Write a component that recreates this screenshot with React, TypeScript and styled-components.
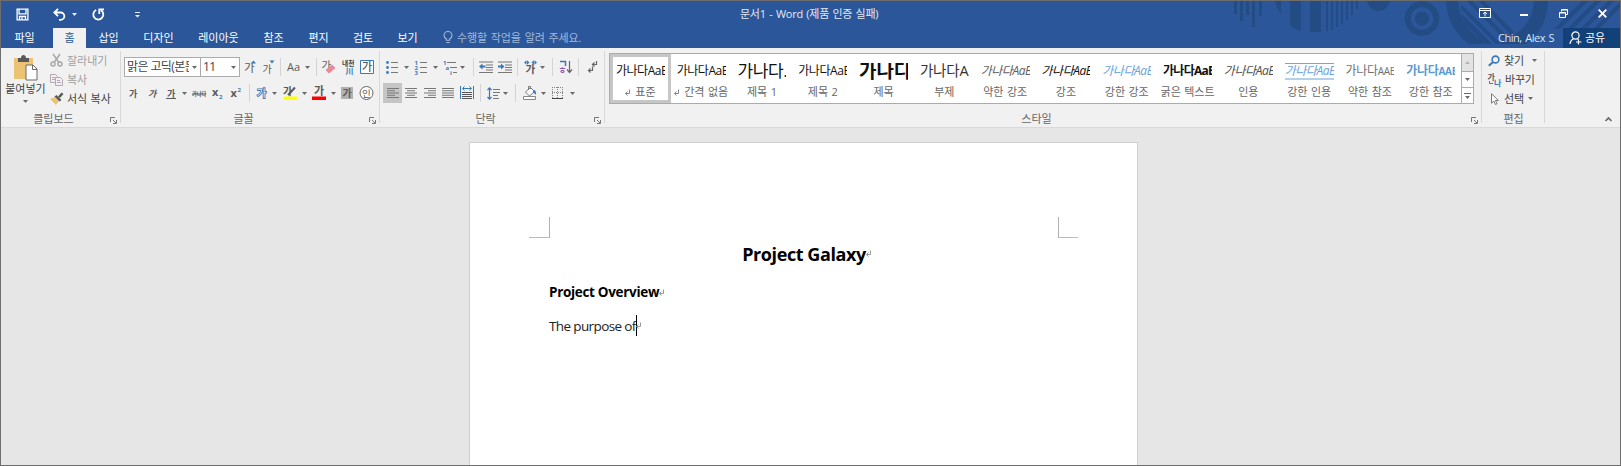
import React from 'react';
import styled, { createGlobalStyle, css } from 'styled-components';

const BLUE = '#2b579a';
const ACCENT = '#3b78b8';
const INK = '#5a5a5a';
const UI = `'Open Sans', 'Noto Sans CJK KR', sans-serif`;

const Global = createGlobalStyle`
  * { box-sizing: border-box; }
  html, body { margin: 0; padding: 0; background: #e6e6e6; }
  body { font-family: ${UI}; font-size: 11px; line-height: 16px; overflow: hidden; }
  svg { display: block; flex: none; overflow: visible; }
`;

const Window = styled.div`
  width: 1621px;
  height: 466px;
  border: 1px solid #6e6e6e;
  background: #e6e6e6;
  display: flex;
  flex-direction: column;
  overflow: hidden;
`;

const Text = styled.span<{ $size?: number; $ls?: number; $ws?: number; $color?: string }>`
  font-size: ${p => p.$size ?? 11}px;
  letter-spacing: ${p => p.$ls ?? 0}px;
  word-spacing: ${p => p.$ws ?? 1}px;
  color: ${p => p.$color ?? 'inherit'};
  white-space: pre;
  flex: none;
`;

/* ---------- header ---------- */
const Header = styled.header`
  position: relative;
  flex: none;
  height: 47px;
  background: ${BLUE};
  color: #fff;
`;
const Pattern = styled.svg`
  position: absolute;
  right: 0;
  top: 0;
`;
const TitleBar = styled.div`
  position: relative;
  display: flex;
  height: 27px;
  align-items: center;
`;
const QuickAccess = styled.div`
  display: flex;
  align-items: center;
  width: 739px;
  padding-left: 15px;
  height: 25px;
`;
const Title = styled.div`
  padding-bottom: 1px;
  display: flex;
`;
const Gap = styled.span<{ $w: number }>`
  flex: none;
  width: ${p => p.$w}px;
`;
const WindowButtons = styled.div`
  display: flex;
  align-items: center;
  margin-left: auto;
  padding: 0 13px 3px 0;
`;
const TabBar = styled.nav`
  position: relative;
  display: flex;
  height: 20px;
  align-items: stretch;
`;
const Tab = styled.div<{ $w: number; $active?: boolean; $shift?: number }>`
  width: ${p => p.$w}px;
  flex: none;
  display: flex;
  align-items: center;
  justify-content: center;
  padding-bottom: 1px;
  padding-right: ${p => p.$shift ?? 0}px;
  ${p => p.$active && css`background: #f1f1f1; color: ${BLUE};`}
`;
const Tell = styled.div`
  display: flex;
  align-items: center;
  gap: 4px;
  margin-left: 13px;
  padding-bottom: 1px;
  color: #a3b8d8;
`;
const Account = styled.div`
  margin-left: auto;
  margin-right: 9px;
  display: flex;
  align-items: center;
  color: #dfe6f1;
`;
const Share = styled.div`
  width: 57px;
  background: #124078;
  display: flex;
  align-items: center;
  gap: 3px;
  padding-left: 6px;
`;

/* ---------- ribbon ---------- */
const Ribbon = styled.section`
  flex: none;
  height: 80px;
  background: #f1f1f1;
  border-bottom: 1px solid #d9d9d9;
  display: flex;
  color: #444;
`;
const Group = styled.div<{ $w: number }>`
  position: relative;
  width: ${p => p.$w}px;
  flex: none;
  display: flex;
  flex-direction: column;
  justify-content: space-between;
  &::after {
    content: '';
    position: absolute;
    right: 0;
    top: 3px;
    height: 72px;
    width: 1px;
    background: #d8d8d8;
  }
`;
const GroupFoot = styled.div`
  height: 16px;
  display: flex;
  align-items: center;
  justify-content: center;
  color: #666;
`;
const Launcher = styled.div`
  position: absolute;
  right: 4px;
  bottom: 3px;
`;
const Rows = styled.div`
  display: flex;
  flex-direction: column;
  gap: 6px;
  padding-top: 9px;
`;
const Row = styled.div`
  display: flex;
  align-items: center;
  height: 20px;
`;
const Cell = styled.div<{ $ml: number }>`
  flex: none;
  margin-left: ${p => p.$ml}px;
`;
const Divider = styled.div<{ $ml: number }>`
  flex: none;
  margin-left: ${p => p.$ml}px;
  width: 1px;
  height: 18px;
  background: #d4d4d4;
`;
const Combo = styled.div<{ $w: number; $ml: number }>`
  flex: none;
  width: ${p => p.$w}px;
  margin-left: ${p => p.$ml}px;
  height: 20px;
  border: 1px solid #ababab;
  background: #fff;
  display: flex;
  align-items: center;
  justify-content: space-between;
  padding: 0 3px 0 2px;
`;
const ComboText = styled.div<{ $w: number }>`
  width: ${p => p.$w}px;
  overflow: hidden;
  white-space: pre;
  font-size: 12px;
  letter-spacing: -0.6px;
`;
const Pressed = styled.div<{ $ml: number }>`
  flex: none;
  margin-left: ${p => p.$ml}px;
  width: 19px;
  height: 20px;
  background: #c5c5c5;
  display: flex;
  align-items: center;
  justify-content: center;
`;
const ClipBody = styled.div`
  display: flex;
`;
const Paste = styled.div`
  width: 49px;
  padding-top: 7px;
  display: flex;
  flex-direction: column;
  align-items: center;
`;
const Commands = styled.div`
  display: flex;
  flex-direction: column;
  padding-top: 3px;
`;
const Command = styled.div<{ $off?: boolean }>`
  height: 19px;
  display: flex;
  align-items: center;
  gap: 4px;
  color: ${p => (p.$off ? '#a0a0a0' : '#444')};
`;
const Gallery = styled.div`
  margin: 5px 7px 0 4px;
  width: 865px;
  height: 51px;
  border: 1px solid #ababab;
  background: #fff;
  display: flex;
`;
const StyleItem = styled.div<{ $on?: boolean }>`
  width: 60.8px;
  flex: none;
  height: 49px;
  display: flex;
  flex-direction: column;
  align-items: center;
  ${p => p.$on && css`box-shadow: inset 0 0 0 3px #c6c6c6;`}
`;
const Preview = styled.div<{
  $size: number; $ls: number; $color?: string; $bold?: boolean; $italic?: boolean; $lined?: boolean; $caps?: boolean;
}>`
  width: 49px;
  height: 17px;
  margin-top: 9px;
  line-height: 16px;
  overflow: hidden;
  white-space: pre;
  font-size: ${p => p.$size}px;
  letter-spacing: ${p => p.$ls}px;
  color: ${p => p.$color ?? '#111'};
  font-weight: ${p => (p.$bold ? 700 : 400)};
  font-style: ${p => (p.$italic ? 'italic' : 'normal')};
  ${p => p.$lined && css`border-top: 1px solid #74a7dc; border-bottom: 2px solid #b4cfeb; line-height: 14px;`}
  ${p => p.$caps && css`& > span { font-size: 10px; }`}
`;
const Caption = styled.div`
  margin-top: 4px;
  display: flex;
  align-items: center;
  gap: 4px;
  color: #666;
  white-space: pre;
`;
const Scroller = styled.div`
  margin-left: auto;
  width: 12px;
  border-left: 1px solid #ababab;
  display: flex;
  flex-direction: column;
`;
const ScrollButton = styled.div<{ $h: number; $off?: boolean }>`
  height: ${p => p.$h}px;
  display: flex;
  align-items: center;
  justify-content: center;
  background: ${p => (p.$off ? '#e3e3e3' : '#fff')};
  & + & { border-top: 1px solid #ababab; }
`;
const Collapse = styled.div`
  margin: auto 8px 5px auto;
`;

/* ---------- document ---------- */
const Canvas = styled.main`
  flex: 1;
  display: flex;
  padding: 14px 0 0 468px;
`;
const Page = styled.article`
  width: 669px;
  height: 400px;
  background: #fff;
  border: 1px solid #cfcfcf;
  padding: 74px 59px 0;
  color: #000;
`;
const Marks = styled.div`
  display: flex;
  justify-content: space-between;
`;
const Corner = styled.div<{ $side: 'left' | 'right' }>`
  width: ${p => (p.$side === 'left' ? 21 : 20)}px;
  height: 21px;
  border-bottom: 1px solid #bdbdbd;
  ${p => (p.$side === 'left' ? 'border-right' : 'border-left')}: 1px solid #b0b0b0;
`;
const Line = styled.div<{ $h: number; $center?: boolean }>`
  height: ${p => p.$h}px;
  display: flex;
  align-items: center;
  justify-content: ${p => (p.$center ? 'center' : 'flex-start')};
  margin: 0 20px;
  padding-left: ${p => (p.$center ? 7 : 0)}px;
  white-space: pre;
`;
const Heading = styled.span<{ $size: number; $ls: number }>`
  font-size: ${p => p.$size}px;
  letter-spacing: ${p => p.$ls}px;
  font-weight: 700;
`;
const Body = styled.span`
  font-size: 13.5px;
  letter-spacing: -0.62px;
  color: #222;
`;
const Caret = styled.span`
  width: 1px;
  height: 21px;
  background: #000;
  margin: 0 -1px 0 0;
`;

/* ---------- drawings ---------- */
const Arrow = ({ c = '#6a6a6a' }: { c?: string }) => (
  <svg width="5" height="3"><path d="M0 0h5L2.5 3z" fill={c} /></svg>
);
const Drop = ({ ml }: { ml: number }) => <Cell $ml={ml}><Arrow /></Cell>;

const LauncherIcon = () => (
  <svg width="7" height="7" fill="none" stroke="#777">
    <path d="M.5 5V.5H5M3 3l3 3M6.5 3v3.5H3" />
  </svg>
);
const Return = ({ c = '#888' }: { c?: string }) => (
  <svg width="6" height="7" fill="none" stroke={c}>
    <path d="M4.500 0.500v4H.5M2.500 2.500l-2 2 2 2" />
  </svg>
);
const Glyph = ({ x = 0, y = 10, s = 11, c = INK, w = 400, children, it }: any) => (
  <text x={x} y={y} fontSize={s} fill={c} fontWeight={w} fontStyle={it ? 'italic' : 'normal'}
    fontFamily={UI} stroke="none">{children}</text>
);

const SaveIcon = () => (
  <svg width="13" height="13" fill="none" stroke="#fff" strokeWidth="1.3">
    <path d="M1.100 1.100h10.800v10.800H1.100zM3 1.100v4.800h7V1.100M3.500 11.900V8.500h6v3.400M6 9.500v2" />
  </svg>
);
const UndoIcon = () => (
  <svg width="13" height="13" fill="none" stroke="#fff" strokeWidth="1.8">
    <path d="M5 .8L1.3 4.5 5 8.2M1.5 4.5h6.2a3.6 3.6 0 0 1 0 7.3H6" />
  </svg>
);
const RedoIcon = () => (
  <svg width="13" height="13" fill="none" stroke="#fff" strokeWidth="1.8">
    <path d="M4.200 2A5 5 0 1 0 9 2.300M7.300 6V1.400H12" />
  </svg>
);
const CustomizeIcon = () => (
  <svg width="5" height="6" fill="#e8eef7"><path d="M0 0h5v1H0zM0 3h5L2.5 5.6z" /></svg>
);
const BulbIcon = () => (
  <svg width="10" height="13" fill="none" stroke="#a3b8d8" strokeWidth="1.1">
    <path d="M3.3 9.3V8C1.6 6.9 1 5.800 1 4.500a4 4 0 0 1 8 0c0 1.300-.6 2.400-2.300 3.500v1.300zM3.300 11.500h3.400" />
  </svg>
);
const PersonIcon = () => (
  <svg width="13" height="14" fill="none" stroke="#fff" strokeWidth="1.2">
    <circle cx="6.500" cy="4.500" r="3.600" />
    <path d="M1 13c.3-2.800 1.800-4.500 3.500-5.200M8.500 7.800l.8.600M9.500 8.500v5M7 11h5.500" />
  </svg>
);
const HeaderPattern = () => (
  <Pattern width="440" height="47" fill="#234b84">
    <path d="M54 0h3v13h-3zM60 0h3v20h-3zM66 0h3v14h-3zM72 0h3v26h-3zM79 0h3v15h-3z" />
    <path d="M95 0h6v13c-3-4-5-8-6-13zM110 0h11v30c-4-1-8-3-11-6zM130 0h11v31h-11z" />
    <path d="M146 0h2v30h-2zM151 0h2v29h-2zM156 0h2v26h-2zM161 0h2v23h-2zM166 0h2v19h-2zM171 0h2v14h-2zM176 0h2v8h-2z" />
    <path d="M187 0h23c-1 6-6 10-11.500 10S188 6 187 0z" />
    <circle cx="242" cy="17.500" r="14.300" fill="none" stroke="#234b84" strokeWidth="6" />
    <circle cx="242" cy="17.500" r="7" />
    <path d="M266 0h12c1 13 6 24 16 33l10 8v2h-15C275 33 267 18 266 0zM354 0h14c0 17-8 33-22 43h-26l12-8c13-7 21-18 22-35z" />
    <path d="M281 12l31 31h-6L285 23zM281 3l40 40h-5L281 8zM287 0h5l38 38-3 3zM299 0h5l30 31-3 3z" />
    <path d="M402 0h6l-28 28h-6zM415 0h6l-28 28h-6zM428 0h6l-28 28h-6zM440 1v6l-21 21h-6z" />
  </Pattern>
);
const PasteIcon = () => (
  <svg width="25" height="26">
    <path d="M1 3h19v21H1z" fill="#ebc373" />
    <path d="M5 3h3c0-4 5-4 5 0h3v4H5z" fill="#595959" />
    <path d="M13 10h7l4 4v11H13z" fill="#fff" stroke="#6a6a6a" />
    <path d="M19.500 10v4.500H24" fill="none" stroke="#6a6a6a" />
  </svg>
);
const CutIcon = () => (
  <svg width="13" height="13" fill="none" stroke="#a8a8a8" strokeWidth="1.5">
    <path d="M3 0l6 8.500M10 0L4 8.500" /><circle cx="3" cy="10" r="2" /><circle cx="10" cy="10" r="2" />
  </svg>
);
const CopyIcon = () => (
  <svg width="13" height="12" fill="#f4eef4" stroke="#b3a9b3">
    <path d="M.5.5h5l2 2v6h-7zM2 3.500h3M2 5.500h3" />
    <path d="M5.500 3.500h5l2 2v6h-7zM7 6.500h3M7 8.500h4" />
  </svg>
);
const BrushIcon = () => (
  <svg width="13" height="13">
    <path d="M0 7l5-2 4 4-3 4z" fill="#ebc373" />
    <path d="M4.500 4.500L6.500 3l5 5-2 1.500z" fill="#595959" />
    <path d="M8 4.500L11.500.5l2 1.500L10 6z" fill="#595959" />
  </svg>
);
const Lines = ({ rows }: { rows: number[][] }) => (
  <svg width="12" height="10" fill="#777">
    {rows.map(([x, w], i) => <rect key={i} x={x} y={i * 2.250} width={w} height="1" />)}
  </svg>
);
const ListIcon = ({ kind }: { kind: 'dot' | 'num' }) => (
  <svg width="12" height="14" fill="#777">
    <path d="M5 2h7v1H5zM5 7h7v1H5zM5 12h7v1H5z" />
    {kind === 'dot'
      ? [2.500, 7.500, 12.500].map(y => <circle key={y} cx="1.500" cy={y} r="1.400" fill={ACCENT} />)
      : ['1', '2', '3'].map((n, i) => <Glyph key={n} x={-0.500} y={5 + i * 5} s={6} c={ACCENT} w={700}>{n}</Glyph>)}
  </svg>
);
const MultiIcon = () => (
  <svg width="15" height="14" fill="#777">
    <path d="M4 2h9v1H4zM7 7h7v1H7zM10 12h4v1h-4z" />
    <Glyph x={0} y={5} s={6} c={ACCENT} w={700}>1</Glyph>
    <Glyph x={2.500} y={10} s={6} c={ACCENT} w={700}>a</Glyph>
    <Glyph x={7} y={15} s={6} c={ACCENT} w={700}>i</Glyph>
  </svg>
);
const IndentIcon = ({ out }: { out?: boolean }) => (
  <svg width="14" height="12" fill="#777">
    <path d="M0 .5h14v1H0zM7 3.500h7v1H7zM7 6h7v1H7zM7 8.500h7v1H7zM0 11h14v1H0z" />
    <path d={out ? 'M0 5.500L3.500 2.500v2H6.500v2h-3v2z' : 'M6.500 5.500L3 2.500v2H0v2h3v2z'} fill={ACCENT} />
  </svg>
);
const AsianIcon = () => (
  <svg width="15" height="14">
    <path d="M0 2.500L2.500.3v4.400zM5.500 2.500L3 .3v4.400zM7.500 2.500L10 .3v4.400zM13 2.500L10.500.3v4.400z" fill={ACCENT} />
    <Glyph x={1.500} y={13} s={10.500} w={700}>가</Glyph>
  </svg>
);
const SortIcon = () => (
  <svg width="13" height="14">
    <path d="M1 1.500h5.500V6" fill="none" stroke={ACCENT} strokeWidth="1.500" />
    <Glyph x={-0.500} y={13} s={8.500} c="#8b52b5" w={700}>ㅎ</Glyph>
    <path d="M10.500 1v11M8 9.500l2.500 3 2.500-3" fill="none" stroke="#666" strokeWidth="1.200" />
  </svg>
);
const MarksIcon = () => (
  <svg width="10" height="12" fill="none" stroke="#666" strokeWidth="1.200">
    <path d="M8.500 0v3.500H4.500M6.500 1.500l-2 2 2 2M4.500 5.500v4H.5M2.500 7.500l-2 2 2 2" />
  </svg>
);
const DistributeIcon = () => (
  <svg width="14" height="14">
    <path d="M0 0h1v13H0zM13 0h1v13h-1z" fill={ACCENT} />
    <path d="M4.500.5L2.500 2.500l2 2M9.500.5l2 2-2 2M3 2.500h8" fill="none" stroke={ACCENT} />
    <path d="M2 6h10v1H2zM2 8h10v1H2zM2 10h10v1H2zM2 12h10v1H2z" fill="#555" />
  </svg>
);
const SpacingIcon = () => (
  <svg width="13" height="13">
    <path d="M2.500 1v11M.5 3l2-2.200 2 2.200M.5 10l2 2.200 2-2.200" fill="none" stroke={ACCENT} strokeWidth="1.200" />
    <path d="M6 2h7v1H6zM6 5h7v1H6zM6 8h5v1H6zM6 11h6v1H6z" fill="#777" />
  </svg>
);
const ShadingIcon = () => (
  <svg width="15" height="14">
    <path d="M3.500 6l5-4.500 4 4-5 4.500z" fill="#fff" stroke="#777" />
    <path d="M6.500 4V.5h2V3" fill="none" stroke="#777" />
    <path d="M11.500 4c2 0 3 2 2.500 5-1-1.500-2-2-3-2.500z" fill={ACCENT} />
    <path d="M1.500 10.500h12v3h-12z" fill="#fff" stroke="#888" />
  </svg>
);
const BordersIcon = () => (
  <svg width="12" height="12" fill="none" stroke="#888">
    <path d="M.5 0v11M5.500 0v11M10.500 0v11M0 .5h11M0 5.500h11" strokeDasharray="1 1" />
    <path d="M0 11.500h11" stroke="#444" />
  </svg>
);
const EraserIcon = () => (
  <svg width="15" height="14">
    <Glyph x={-0.500} y={9} s={10.500}>가</Glyph>
    <path d="M3.500 10l6.500-5.500L13.500 8 7 13.500z" fill="#e8899b" />
  </svg>
);
const SearchIcon = () => (
  <svg width="12" height="12" fill="none" stroke={ACCENT} strokeWidth="1.600">
    <circle cx="7.500" cy="4.500" r="3.400" /><path d="M5 7L.8 10.800" strokeWidth="2" />
  </svg>
);
const ReplaceIcon = () => (
  <svg width="13" height="13">
    <Glyph x={-0.500} y={7} s={8} w={700}>가</Glyph>
    <Glyph x={6} y={12.500} s={8} w={700} c={ACCENT}>나</Glyph>
    <path d="M1.500 8v2.500H5" fill="none" stroke={ACCENT} />
  </svg>
);
const CursorIcon = () => (
  <svg width="12" height="12" fill="#fff" stroke="#777">
    <path d="M3.500.7v9.500l2.300-2.100L7.500 11.500l1.500-.8-1.600-3.200h3z" />
  </svg>
);

type Style = {
  name: string; text?: string; mark?: boolean; size?: number; ls?: number; color?: string;
  bold?: boolean; italic?: boolean; lined?: boolean; caps?: string;
};
const styles: Style[] = [
  { name: '표준', mark: true },
  { name: '간격 없음', mark: true },
  { name: '제목 1', size: 17, ls: -0.4, text: '가나다.' },
  { name: '제목 2' },
  { name: '제목', size: 19, ls: 0, text: '가나다', bold: true },
  { name: '부제', size: 14.5, ls: -0.1, text: '가나다A', color: '#333' },
  { name: '약한 강조', color: '#606060', italic: true },
  { name: '강조', italic: true },
  { name: '강한 강조', color: '#69a3dc', italic: true },
  { name: '굵은 텍스트', bold: true, ls: -0.75 },
  { name: '인용', color: '#505050', italic: true },
  { name: '강한 인용', color: '#69a3dc', italic: true, lined: true },
  { name: '약한 참조', ls: -0.3, text: '가나다', caps: 'AAB', color: '#707070' },
  { name: '강한 참조', ls: -0.3, text: '가나다', caps: 'AAB', color: '#5b9bd5', bold: true },
];

const tabs: [string, number][] = [
  ['삽입', 45], ['디자인', 55], ['레이아웃', 65], ['참조', 45], ['편지', 45], ['검토', 44], ['보기', 45],
];

export default function App() {
  return (
    <Window>
      <Global />
      <Header>
        <HeaderPattern />
        <TitleBar>
          <QuickAccess>
            <SaveIcon /><Gap $w={24} /><UndoIcon /><Gap $w={6} /><Arrow c="#e8eef7" />
            <Gap $w={15} /><RedoIcon /><Gap $w={30} /><CustomizeIcon />
          </QuickAccess>
          <Title><Text $color="#e4eaf4" $ls={-0.25} $ws={0.8}>문서1 - Word (제품 인증 실패)</Text></Title>
          <WindowButtons>
            <svg width="12" height="10" fill="none" stroke="#fff">
              <path d="M.5.5h11v9H.5zM.5 2.500h11M6 8.500V4.500M4 6l2-2 2 2" />
            </svg>
            <Gap $w={29} />
            <svg width="8" height="10" fill="#fff"><path d="M0 6h8v2H0z" /></svg>
            <Gap $w={31} />
            <svg width="9" height="9" fill="none" stroke="#fff">
              <path d="M2.500 2.500v-2h6v5h-2M2.500 1h6M.5 3.500h6v5h-6zM.5 4h6" />
            </svg>
            <Gap $w={30} />
            <svg width="9" height="9" fill="none" stroke="#fff" strokeWidth="1.800"><path d="M.7.7l7.600 7.600M8.300.7L.7 8.300" /></svg>
          </WindowButtons>
        </TitleBar>
        <TabBar>
          <Tab $w={52} $shift={5}><Text>파일</Text></Tab>
          <Tab $w={33} $active><Text>홈</Text></Tab>
          {tabs.map(([t, w]) => <Tab key={t} $w={w}><Text>{t}</Text></Tab>)}
          <Tell><BulbIcon /><Text $ls={-0.1}>수행할 작업을 알려 주세요.</Text></Tell>
          <Account><Text $ls={-0.45}>Chin, Alex S</Text></Account>
          <Share><PersonIcon /><Text>공유</Text></Share>
        </TabBar>
      </Header>

      <Ribbon>
        <Group $w={120}>
          <ClipBody>
            <Paste>
              <PasteIcon />
              <Text>붙여넣기</Text>
              <svg width="5" height="8"><path d="M0 3h5L2.500 6z" fill="#6a6a6a" /></svg>
            </Paste>
            <Commands>
              <Command $off><CutIcon /><Text>잘라내기</Text></Command>
              <Command $off><CopyIcon /><Text>복사</Text></Command>
              <Command><BrushIcon /><Text $ws={0.5}>서식 복사</Text></Command>
            </Commands>
          </ClipBody>
          <GroupFoot><Text>클립보드</Text><Gap $w={15} /></GroupFoot>
          <Launcher><LauncherIcon /></Launcher>
        </Group>

        <Group $w={259}>
          <Rows>
            <Row>
              <Combo $w={77} $ml={3}><ComboText $w={62}>맑은 고딕(본문</ComboText><Arrow /></Combo>
              <Combo $w={40} $ml={-1}><ComboText $w={20}>11</ComboText><Arrow /></Combo>
              <Cell $ml={4}><svg width="14" height="14"><Glyph y={12} s={11.500}>가</Glyph><path d="M7 3.500L9.500.5l2.500 3z" fill={ACCENT} /></svg></Cell>
              <Cell $ml={4}><svg width="14" height="14"><Glyph x={0.500} y={12.500} s={10}>가</Glyph><path d="M7.500.5h5l-2.500 3z" fill={ACCENT} /></svg></Cell>
              <Divider $ml={4} />
              <Cell $ml={6}><svg width="14" height="14"><Glyph y={11} s={11}>Aa</Glyph></svg></Cell>
              <Drop ml={4} />
              <Divider $ml={6} />
              <Cell $ml={5}><EraserIcon /></Cell>
              <Cell $ml={5}>
                <svg width="14" height="14">
                  <Glyph x={0} y={5.500} s={6.800} w={700} c="#444">내천</Glyph>
                  <Glyph x={3.500} y={13.500} s={8} w={700} c={ACCENT}>川</Glyph>
                </svg>
              </Cell>
              <Cell $ml={4}>
                <svg width="14" height="14"><path d="M.5.5h13v13H.5z" fill="#fff" stroke={ACCENT} /><Glyph x={2} y={11} s={11} w={500}>가</Glyph></svg>
              </Cell>
            </Row>
            <Row>
              <Cell $ml={8}><svg width="10" height="14"><Glyph y={10.500} s={9} w={700}>가</Glyph></svg></Cell>
              <Cell $ml={9}><svg width="10" height="14"><Glyph y={10.500} s={9} w={700} it>가</Glyph></svg></Cell>
              <Cell $ml={8}><svg width="11" height="14"><Glyph x={1} y={10.500} s={9} w={700}>가</Glyph><path d="M0 12.500h10" stroke={INK} /></svg></Cell>
              <Drop ml={5} />
              <Cell $ml={5}><svg width="15" height="14"><Glyph x={0} y={10} s={5.200} w={700}>가나다</Glyph><path d="M0 8h14" stroke={INK} /></svg></Cell>
              <Cell $ml={5}><svg width="12" height="14"><Glyph y={10} s={11} w={700}>x</Glyph><Glyph x={7} y={13} s={6} w={700} c={ACCENT}>2</Glyph></svg></Cell>
              <Cell $ml={6}><svg width="12" height="14"><Glyph x={0.500} y={11} s={11} w={700}>x</Glyph><Glyph x={7.500} y={6} s={6} w={700} c={ACCENT}>2</Glyph></svg></Cell>
              <Divider $ml={7} />
              <Cell $ml={6}><svg width="13" height="14"><text x="1" y="11" fontSize="10" fontFamily={UI} fill="#e8f0f8" stroke={ACCENT} strokeWidth="1.800" paintOrder="stroke">가</text></svg></Cell>
              <Drop ml={3} />
              <Cell $ml={6}>
                <svg width="15" height="14"><Glyph x={0} y={8.500} s={10} w={700}>가</Glyph><path d="M5 9l7-7.500" stroke={INK} strokeWidth="2" /><path d="M1 10.500h13v3.500H1z" fill="#ffff00" /></svg>
              </Cell>
              <Drop ml={4} />
              <Cell $ml={5}>
                <svg width="15" height="14"><Glyph x={2} y={9} s={11} w={700}>가</Glyph><path d="M0 10.500h14v3.500H0z" fill="#ff0000" /></svg>
              </Cell>
              <Drop ml={4} />
              <Cell $ml={5}><svg width="13" height="13"><path d="M0 0h12v12H0z" fill="#b1b1b1" /><Glyph x={1.500} y={10} s={10} w={700}>가</Glyph></svg></Cell>
              <Cell $ml={5}><svg width="15" height="14"><circle cx="7.500" cy="7" r="6.500" fill="#fff" stroke="#666" /><Glyph x={3} y={10.500} s={9.500}>인</Glyph></svg></Cell>
            </Row>
          </Rows>
          <GroupFoot><Text>글꼴</Text><Gap $w={14} /></GroupFoot>
          <Launcher><LauncherIcon /></Launcher>
        </Group>

        <Group $w={225}>
          <Rows>
            <Row>
              <Cell $ml={6}><ListIcon kind="dot" /></Cell><Drop ml={6} />
              <Cell $ml={6}><ListIcon kind="num" /></Cell><Drop ml={6} />
              <Cell $ml={5}><MultiIcon /></Cell><Drop ml={2} />
              <Divider $ml={8} />
              <Cell $ml={5}><IndentIcon out /></Cell>
              <Cell $ml={5}><IndentIcon /></Cell>
              <Divider $ml={5} />
              <Cell $ml={6}><AsianIcon /></Cell><Drop ml={1} />
              <Divider $ml={7} />
              <Cell $ml={6}><SortIcon /></Cell>
              <Divider $ml={6} />
              <Cell $ml={9}><MarksIcon /></Cell>
            </Row>
            <Row>
              <Pressed $ml={3}><Lines rows={[[0, 12], [0, 8], [0, 12], [0, 8], [0, 12]]} /></Pressed>
              <Cell $ml={3}><Lines rows={[[0, 12], [2, 8], [0, 12], [2, 8], [0, 12]]} /></Cell>
              <Cell $ml={7}><Lines rows={[[0, 12], [4, 8], [0, 12], [4, 8], [0, 12]]} /></Cell>
              <Cell $ml={6}><Lines rows={[[0, 12], [0, 12], [0, 12], [0, 12], [0, 12]]} /></Cell>
              <Cell $ml={6}><DistributeIcon /></Cell>
              <Divider $ml={6} />
              <Cell $ml={6}><SpacingIcon /></Cell><Drop ml={3} />
              <Divider $ml={7} />
              <Cell $ml={6}><ShadingIcon /></Cell><Drop ml={4} />
              <Cell $ml={6}><BordersIcon /></Cell><Drop ml={6} />
            </Row>
          </Rows>
          <GroupFoot><Text>단락</Text><Gap $w={14} /></GroupFoot>
          <Launcher><LauncherIcon /></Launcher>
        </Group>

        <Group $w={877}>
          <Gallery>
            {styles.map(s => (
              <StyleItem key={s.name} $on={s.name === '표준'}>
                <Preview $size={s.size ?? 12} $ls={s.ls ?? -0.45} $color={s.color} $bold={s.bold} $italic={s.italic} $lined={s.lined} $caps={!!s.caps}>
                  {s.text ?? '가나다AaB'}{s.caps && <span>{s.caps}</span>}
                </Preview>
                <Caption>{s.mark && <Return />}<Text $ws={0.6}>{s.name}</Text></Caption>
              </StyleItem>
            ))}
            <Scroller>
              <ScrollButton $h={17} $off><svg width="5" height="3"><path d="M0 3h5L2.500 0z" fill="#b5b5b5" /></svg></ScrollButton>
              <ScrollButton $h={16}><Arrow /></ScrollButton>
              <ScrollButton $h={16}><svg width="7" height="6" fill="#6a6a6a"><path d="M0 0h7v1H0zM1 3h5L3.500 6z" /></svg></ScrollButton>
            </Scroller>
          </Gallery>
          <GroupFoot><Text>스타일</Text><Gap $w={14} /></GroupFoot>
          <Launcher><LauncherIcon /></Launcher>
        </Group>

        <Group $w={63}>
          <ClipBody>
            <Gap $w={6} />
            <Commands>
              <Command><SearchIcon /><Text>찾기</Text><Gap $w={0} /><Arrow /></Command>
              <Command><ReplaceIcon /><Text $ls={-0.2}>바꾸기</Text></Command>
              <Command><CursorIcon /><Text>선택</Text><Arrow /></Command>
            </Commands>
          </ClipBody>
          <GroupFoot><Text>편집</Text></GroupFoot>
        </Group>
        <Collapse>
          <svg width="7" height="5" fill="none" stroke="#666" strokeWidth="1.600"><path d="M.5 4L3.500 1l3 3" /></svg>
        </Collapse>
      </Ribbon>

      <Canvas>
        <Page>
          <Marks><Corner $side="left" /><Corner $side="right" /></Marks>
          <Line $h={31} $center><Heading $size={18} $ls={-0.42}>Project Galaxy</Heading><Return c="#999" /></Line>
          <Line $h={46}><Heading $size={13.5} $ls={-0.32}>Project Overview</Heading><Return c="#999" /></Line>
          <Line $h={21}><Body>The purpose of</Body><Caret /><Return c="#999" /></Line>
        </Page>
      </Canvas>
    </Window>
  );
}
